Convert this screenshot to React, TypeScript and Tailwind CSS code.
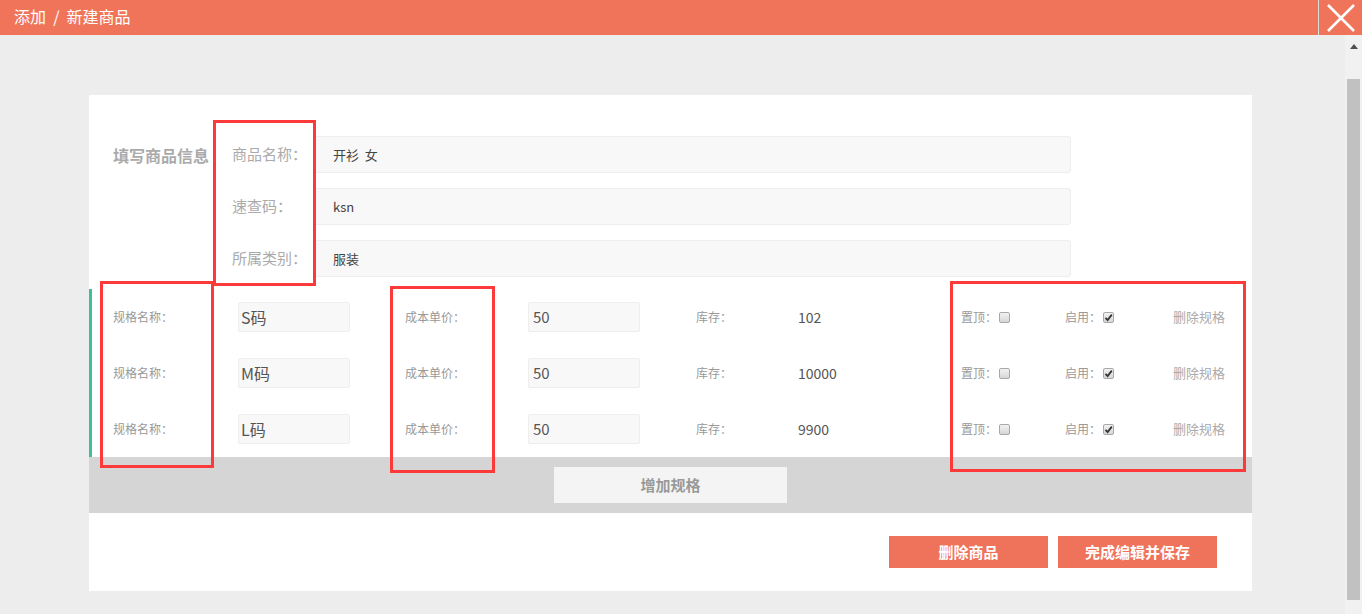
import React from "react";

const font = { fontFamily: '"Noto Sans CJK SC", "Noto Sans", sans-serif' };

function Check({ checked }: { checked?: boolean }) {
  return (
    <span className="relative inline-flex w-[11px] h-[11px] border border-[#a8a8a8] rounded-[2px] bg-gradient-to-b from-[#f2f2f2] to-[#d6d6d6] items-center justify-center">
      {checked && (
        <svg width="9" height="9" viewBox="0 0 9 9" className="absolute">
          <path d="M1.5 4.8 L3.6 7 L7.8 1.6" stroke="#333" strokeWidth="1.8" fill="none" />
        </svg>
      )}
    </span>
  );
}

const specs = [
  { name: "S码", price: "50", stock: "102" },
  { name: "M码", price: "50", stock: "10000" },
  { name: "L码", price: "50", stock: "9900" },
];

export default function App() {
  return (
    <div className="relative w-[1362px] h-[614px] overflow-hidden bg-[#ededed] flex flex-col" style={font}>
      {/* header */}
      <div className="h-[35px] bg-[#ef7459] flex items-center shrink-0">
        <div className="flex-1 pl-[14px] pb-[4px] text-white text-[16px] leading-none whitespace-pre">添加  /  新建商品</div>
        <div className="w-[44px] h-[35px] border-l border-[#dcdcdc] flex items-center justify-center">
          <svg width="30" height="30" viewBox="0 0 30 30">
            <path d="M2 2 L28 28 M28 2 L2 28" stroke="#fff" strokeWidth="2.6" />
          </svg>
        </div>
      </div>

      <div className="flex flex-1 min-h-0">
        {/* main */}
        <div className="flex-1 pt-[60px] pl-[89px]">
          <div className="w-[1163px] h-[496px] bg-white flex flex-col">
            {/* basic info */}
            <div className="flex pt-[41px]">
              <div className="w-[143px] pl-[24px] h-[37px] flex items-center text-[16px] font-bold text-[#aaa]">填写商品信息</div>
              <div className="flex flex-col gap-[15px]">
                {[
                  ["商品名称：", "开衫  女"],
                  ["速查码：", "ksn"],
                  ["所属类别：", "服装"],
                ].map(([l, v]) => (
                  <div key={l} className="flex items-center">
                    <div className="w-[81px] text-[15px] text-[#aaa]">{l}</div>
                    <div className="w-[758px] h-[37px] bg-[#f8f8f8] border border-[#eeeeee] rounded-[3px] flex items-center pl-[19px] text-[13px] text-[#444] whitespace-pre">{v}</div>
                  </div>
                ))}
              </div>
            </div>

            {/* specs */}
            <div className="mt-[12px] border-l-[3px] border-[#3cbf9a] flex flex-col">
              {specs.map((s) => (
                <div key={s.name} className="h-[56px] flex items-center pl-[21px] text-[12px] text-[#999]">
                  <div className="w-[125px]">规格名称：</div>
                  <div className="w-[112px] h-[30px] bg-[#f8f8f8] border border-[#eeeeee] rounded-[2px] flex items-center pl-[2px] text-[16px] text-[#555] mr-[55px]">{s.name}</div>
                  <div className="w-[123px]">成本单价：</div>
                  <div className="w-[112px] h-[30px] bg-[#f8f8f8] border border-[#eeeeee] rounded-[2px] flex items-center pl-[4px] text-[15px] text-[#555] mr-[56px]">{s.price}</div>
                  <div className="w-[102px]">库存：</div>
                  <div className="w-[163px] text-[14px] text-[#555]">{s.stock}</div>
                  <div className="w-[104px] flex items-center gap-[2px]">置顶：<Check /></div>
                  <div className="w-[108px] flex items-center gap-[2px]">启用：<Check checked /></div>
                  <div className="text-[13px] text-[#aaa]">删除规格</div>
                </div>
              ))}
            </div>

            {/* add spec band */}
            <div className="h-[56px] bg-[#d5d5d5] flex items-center justify-center">
              <div className="w-[233px] h-[36px] bg-[#f4f4f4] flex items-center justify-center text-[15px] font-bold text-[#999]">增加规格</div>
            </div>

            {/* bottom buttons */}
            <div className="flex justify-end gap-[10px] pt-[23px] pr-[35px]">
              <div className="w-[159px] h-[32px] bg-[#ee735a] flex items-center justify-center text-white text-[15px] font-bold">删除商品</div>
              <div className="w-[159px] h-[32px] bg-[#ee735a] flex items-center justify-center text-white text-[15px] font-bold">完成编辑并保存</div>
            </div>
          </div>
        </div>

        {/* scrollbar */}
        <div className="w-[17px] bg-[#f1f1f1] flex flex-col items-center">
          <div className="h-[20px] flex items-center justify-center pt-[2px]">
            <svg width="8" height="5" viewBox="0 0 8 5">
              <path d="M0 5 L4 0 L8 5 Z" fill="#505050" />
            </svg>
          </div>
          <div className="mt-[24px] w-[13px] h-[521px] bg-[#c1c1c1]" />
        </div>
      </div>

      {/* red annotation boxes */}
      <div className="absolute left-[213px] top-[120px] w-[103px] h-[166px] border-[3px] border-[#fc3a3a]" />
      <div className="absolute left-[100px] top-[281px] w-[114px] h-[187px] border-[3px] border-[#fc3a3a]" />
      <div className="absolute left-[390px] top-[286px] w-[105px] h-[187px] border-[3px] border-[#fc3a3a]" />
      <div className="absolute left-[950px] top-[281px] w-[296px] h-[191px] border-[3px] border-[#fc3a3a]" />
    </div>
  );
}
